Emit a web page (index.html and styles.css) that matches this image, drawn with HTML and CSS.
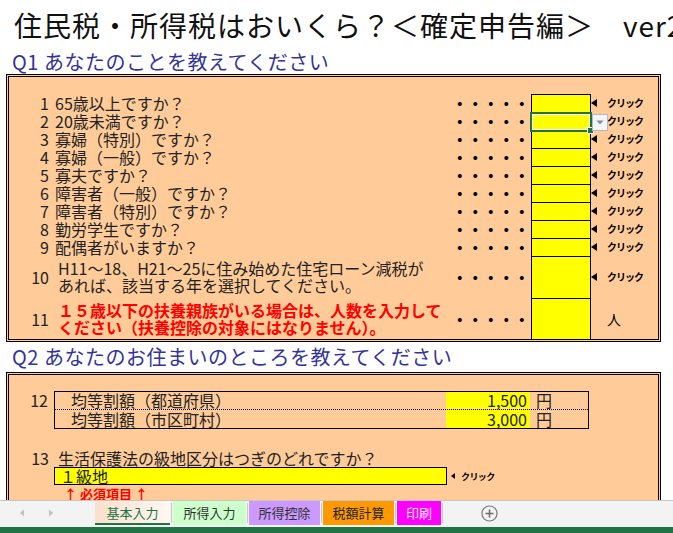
FILE: index.html
```html
<!DOCTYPE html>
<html lang="ja">
<head>
<meta charset="utf-8">
<title>住民税・所得税はおいくら？＜確定申告編＞</title>
<link rel="stylesheet" href="styles.css">
</head>
<body>
<div class="sheet">
  <h1 class="title">住民税・所得税はおいくら？＜確定申告編＞　ver2</h1>
  <h2 class="qhead q1">Q1 あなたのことを教えてください</h2>
  <section class="box box1">
    <div class="row"><span class="num">1</span><span class="txt">65歳以上ですか？</span><span class="dots">・・・・・</span><span class="cell"></span><span class="click"><i class="tri"></i>クリック</span></div>
    <div class="row"><span class="num">2</span><span class="txt">20歳未満ですか？</span><span class="dots">・・・・・</span><span class="cell active"><i class="sel"></i><i class="handle"></i><i class="dd"><svg width="8" height="5" viewBox="0 0 8 5"><path d="M0.5 0.5h7L4 4.5z" fill="#8a8d93"/></svg></i></span><span class="click"><i class="tri"></i>クリック</span></div>
    <div class="row"><span class="num">3</span><span class="txt">寡婦（特別）ですか？</span><span class="dots">・・・・・</span><span class="cell"></span><span class="click"><i class="tri"></i>クリック</span></div>
    <div class="row"><span class="num">4</span><span class="txt">寡婦（一般）ですか？</span><span class="dots">・・・・・</span><span class="cell"></span><span class="click"><i class="tri"></i>クリック</span></div>
    <div class="row"><span class="num">5</span><span class="txt">寡夫ですか？</span><span class="dots">・・・・・</span><span class="cell"></span><span class="click"><i class="tri"></i>クリック</span></div>
    <div class="row"><span class="num">6</span><span class="txt">障害者（一般）ですか？</span><span class="dots">・・・・・</span><span class="cell"></span><span class="click"><i class="tri"></i>クリック</span></div>
    <div class="row"><span class="num">7</span><span class="txt">障害者（特別）ですか？</span><span class="dots">・・・・・</span><span class="cell"></span><span class="click"><i class="tri"></i>クリック</span></div>
    <div class="row"><span class="num">8</span><span class="txt">勤労学生ですか？</span><span class="dots">・・・・・</span><span class="cell"></span><span class="click"><i class="tri"></i>クリック</span></div>
    <div class="row"><span class="num">9</span><span class="txt">配偶者がいますか？</span><span class="dots">・・・・・</span><span class="cell"></span><span class="click"><i class="tri"></i>クリック</span></div>
    <div class="row tall"><span class="num">10</span><span class="txt two">H11～18、H21～25に住み始めた住宅ローン減税が<br>あれば、該当する年を選択してください。</span><span class="dots">・・・・・</span><span class="cell"></span><span class="click"><i class="tri"></i>クリック</span></div>
    <div class="row tall last"><span class="num">11</span><span class="txt two red">１５歳以下の扶養親族がいる場合は、人数を入力して<br>ください（扶養控除の対象にはなりません）。</span><span class="dots">・・・・・</span><span class="cell"></span><span class="unit">人</span></div>
  </section>
  <h2 class="qhead q2">Q2 あなたのお住まいのところを教えてください</h2>
  <section class="box box2">
    <div class="r12">
      <span class="num12">12</span>
      <div class="kin">
        <div class="kline dotted"><span class="kname">均等割額（都道府県）</span><span class="amt">1,500</span><span class="yen">円</span></div>
        <div class="kline"><span class="kname">均等割額（市区町村）</span><span class="amt">3,000</span><span class="yen">円</span></div>
      </div>
    </div>
    <div class="r13"><span class="num13">13</span><span class="txt13">生活保護法の級地区分はつぎのどれですか？</span></div>
    <div class="r13sel"><span class="select">１級地</span><span class="click small"><i class="tri sm"></i>クリック</span></div>
    <div class="req">↑ 必須項目 ↑</div>
  </section>
</div>
<footer class="tabbar">
  <div class="nav">
    <svg width="6" height="8" viewBox="0 0 6 8"><path d="M5 0.5v7L0.8 4z" fill="#c2c2c2"/></svg>
    <svg width="6" height="8" viewBox="0 0 6 8"><path d="M1 0.5v7L5.2 4z" fill="#c2c2c2"/></svg>
  </div>
  <div class="tabs">
    <span class="tab t-active">基本入力</span><span class="sep"></span>
    <span class="tab t-green">所得入力</span><span class="sep"></span>
    <span class="tab t-purple">所得控除</span><span class="sep"></span>
    <span class="tab t-orange">税額計算</span><span class="sep"></span>
    <span class="tab t-magenta">印刷</span><span class="sep"></span>
  </div>
  <div class="add">
    <svg width="17" height="17" viewBox="0 0 17 17"><circle cx="8.5" cy="8.5" r="7.5" fill="none" stroke="#7a7a7a" stroke-width="1.2"/><path d="M8.5 4.5v8M4.5 8.5h8" stroke="#6a6a6a" stroke-width="1.5"/></svg>
  </div>
</footer>
<div class="status"></div>
</body>
</html>
```
FILE: styles.css
```css
html, body {
  margin: 0;
  padding: 0;
}
body {
  width: 673px;
  height: 533px;
  overflow: hidden;
  background: #fff;
  font-family: "Noto Sans CJK JP", "Noto Sans", sans-serif;
  color: #222;
  display: flex;
  flex-direction: column;
}
.sheet {
  flex: none;
  height: 500px;
  overflow: hidden;
}
.title {
  margin: 0;
  height: 50px;
  line-height: 50px;
  padding-left: 14px;
  font-size: 28px;
  font-weight: 400;
  letter-spacing: 1px;
  white-space: nowrap;
  color: #111;
}
.qhead {
  margin: 0;
  padding-left: 12px;
  font-size: 20px;
  font-weight: 400;
  color: #333399;
  letter-spacing: 0.5px;
  white-space: nowrap;
}
.q1 {
  height: 24px;
  line-height: 24px;
}
.q2 {
  height: 30px;
  line-height: 30px;
}
.box {
  margin: 0 12px 0 6px;
  border: 3px double #000;
  background: #ffcc99;
  box-sizing: border-box;
}
.box1 {
  padding-top: 17px;
}
.row {
  display: grid;
  grid-template-columns: 40px 403px 79px 60px 1fr;
  height: 18px;
  align-items: center;
  font-size: 16px;
  line-height: 18px;
}
.row.tall {
  height: 42px;
}
.row.last {
  height: 41px;
}
.num {
  text-align: right;
}
.txt {
  padding-left: 6px;
  white-space: nowrap;
}
.txt.two {
  line-height: 17px;
  padding-left: 9px;
}
.red {
  color: #f00;
  font-weight: 700;
  padding-left: 6px;
}
.dots {
  font-size: 15.5px;
  font-weight: 700;
  color: #000;
  white-space: nowrap;
}
.cell {
  align-self: stretch;
  background: #ff0;
  border: 1px solid #000;
  border-bottom: none;
  box-sizing: border-box;
}
.cell.active {
  position: relative;
}
.sel {
  position: absolute;
  left: -2px;
  top: -1px;
  right: -2px;
  bottom: -2px;
  border: 2px solid #217346;
  box-shadow: inset 0 0 0 1px #fff;
}
.handle {
  position: absolute;
  right: -4px;
  bottom: -4px;
  width: 5px;
  height: 5px;
  background: #217346;
  border: 1px solid #fff;
}
.dd {
  position: absolute;
  left: calc(100% + 2px);
  top: 1px;
  width: 16px;
  height: 17px;
  box-sizing: border-box;
  background: #f3f5f9;
  border: 1px solid #b4b8c0;
  display: flex;
  align-items: center;
  justify-content: center;
}
.click {
  display: flex;
  align-items: center;
  font-size: 10px;
  font-weight: 700;
  letter-spacing: -1px;
  color: #000;
  white-space: nowrap;
}
.tri {
  width: 0;
  height: 0;
  border-top: 4px solid transparent;
  border-bottom: 4px solid transparent;
  border-right: 6px solid #000;
  margin-right: 10px;
}
.unit {
  padding-left: 16px;
  font-size: 14px;
  color: #000;
}
.box2 {
  padding-top: 16px;
  height: 220px;
}
.r12 {
  display: flex;
  align-items: flex-start;
  font-size: 16px;
}
.num12 {
  width: 39px;
  text-align: right;
  line-height: 17px;
  padding-top: 1px;
}
.kin {
  margin-left: 6px;
  width: 535px;
  border: 1px solid #000;
  box-sizing: border-box;
}
.kline {
  display: flex;
  height: 18px;
  line-height: 18px;
}
.kline.dotted {
  border-bottom: 1px dotted #000;
  height: 17px;
  line-height: 17px;
}
.kname {
  flex: 1;
  padding-left: 16px;
}
.amt {
  width: 84px;
  background: #ff0;
  text-align: right;
  padding-right: 3px;
  box-sizing: border-box;
}
.yen {
  width: 58px;
  padding-left: 6px;
  box-sizing: border-box;
}
.r13 {
  display: flex;
  margin-top: 21px;
  height: 17px;
  line-height: 17px;
  font-size: 16px;
}
.num13 {
  width: 40px;
  text-align: right;
}
.txt13 {
  padding-left: 9px;
  white-space: nowrap;
}
.r13sel {
  display: flex;
  align-items: center;
  margin-left: 45px;
  height: 18px;
}
.select {
  width: 393px;
  height: 18px;
  box-sizing: border-box;
  border: 1px solid #000;
  background: #ff0;
  padding-left: 5px;
  font-size: 16px;
  line-height: 16px;
}
.click.small {
  font-size: 9px;
  letter-spacing: -0.6px;
}
.tri.sm {
  border-top-width: 3px;
  border-bottom-width: 3px;
  border-right-width: 4px;
  margin-left: 4px;
  margin-right: 6px;
}
.req {
  margin-left: 55px;
  color: #f00;
  font-weight: 700;
  font-size: 13px;
  line-height: 17px;
}
.tabbar {
  flex: none;
  height: 26px;
  background: #f3f3f3;
  border-top: 1px solid #c6c6c6;
  display: flex;
  align-items: flex-start;
}
.nav {
  width: 95px;
  height: 24px;
  display: flex;
  align-items: center;
  padding-left: 19px;
  gap: 23px;
  box-sizing: border-box;
}
.tabs {
  display: flex;
  height: 24px;
}
.tab {
  height: 24px;
  line-height: 24px;
  font-size: 13px;
  color: #333;
  padding: 0 10px;
  box-sizing: border-box;
  white-space: nowrap;
}
.sep {
  width: 1px;
  background: #c9c9c9;
  margin: 2px 1px;
}
.t-active {
  padding: 0 11.5px;
  color: #217346;
  background: linear-gradient(90deg, #fbe0cb, #fdeee3 60%, #fff7f1);
  border-bottom: 2px solid #217346;
  line-height: 23px;
}
.t-green {
  padding: 0 10.5px;
  background: #ccffcc;
}
.t-purple {
  padding: 0 9.5px;
  background: #cc99ff;
}
.t-orange {
  padding: 0 9.5px;
  background: #ff9900;
  color: #222;
}
.t-magenta {
  padding: 0 9px;
  background: #ff00ff;
  color: #fde8fd;
}
.add {
  margin-left: 37px;
  height: 24px;
  display: flex;
  align-items: center;
}
.status {
  flex: none;
  height: 6px;
  background: #217346;
}
```
